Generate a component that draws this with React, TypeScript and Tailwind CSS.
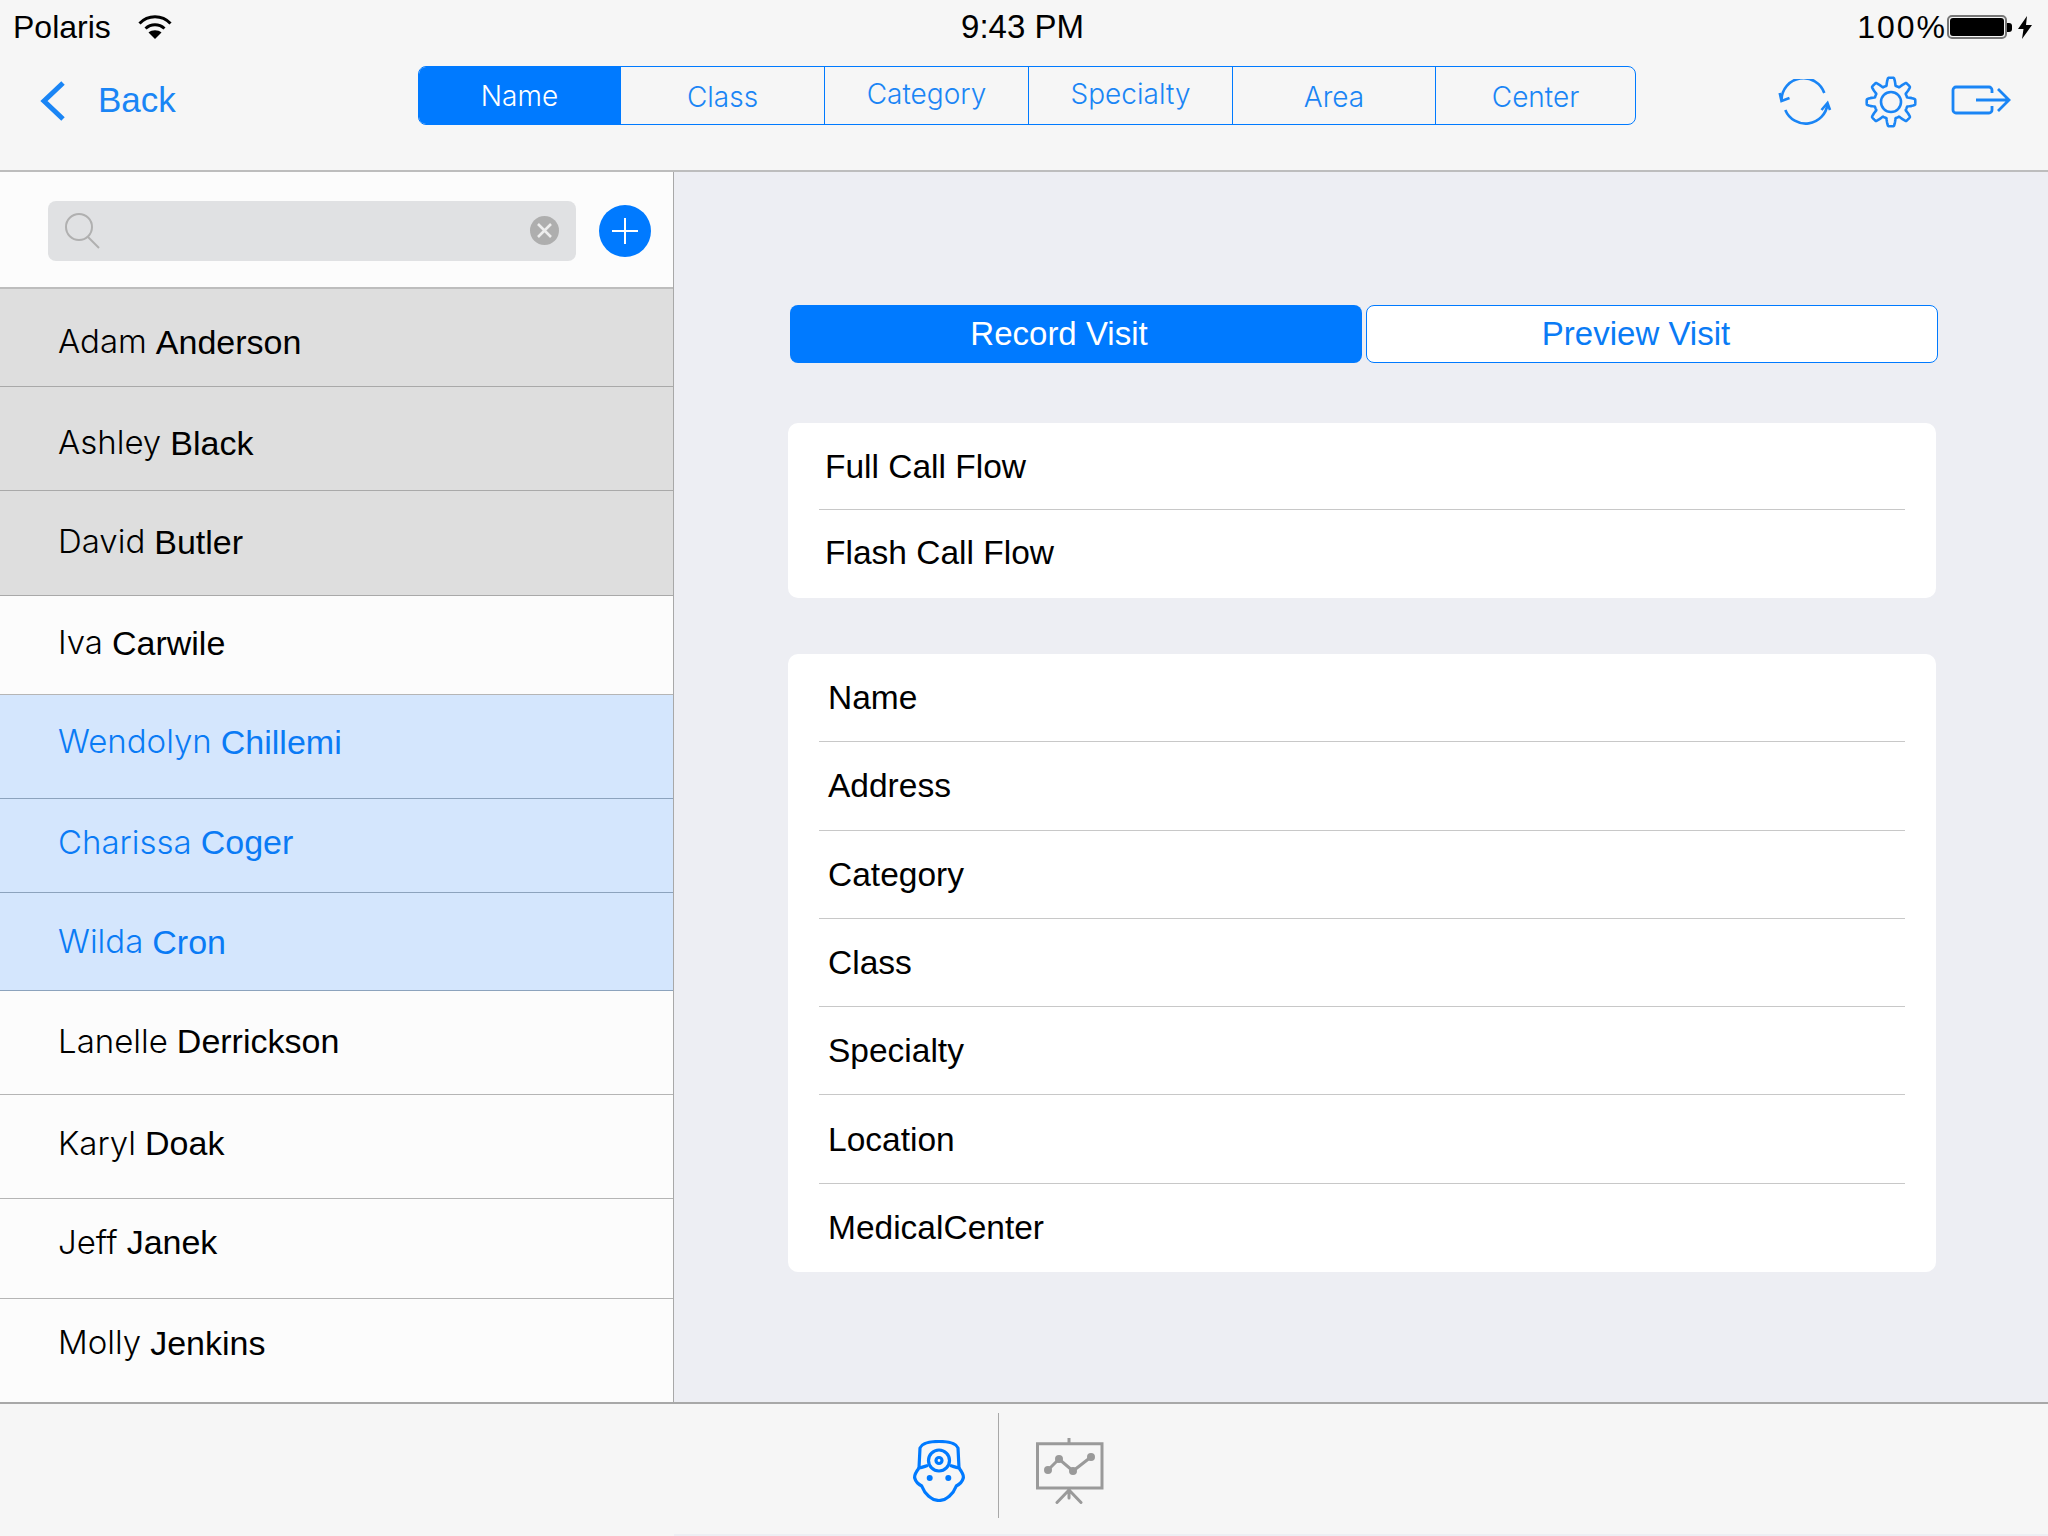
const items = [
  { first: 'Adam', last: 'Anderson', row: 'h-[98px] pt-[9px]', tone: 'gray' },
  { first: 'Ashley', last: 'Black', row: 'h-[104px] pt-[9px]', tone: 'gray' },
  { first: 'David', last: 'Butler', row: 'h-[105px] pb-[2px]', tone: 'gray' },
  { first: 'Iva', last: 'Carwile', row: 'h-[99px] pb-[4px]', tone: 'white' },
  { first: 'Wendolyn', last: 'Chillemi', row: 'h-[104px] pb-[9px]', tone: 'blue' },
  { first: 'Charissa', last: 'Coger', row: 'h-[94px] pb-[6px]', tone: 'blue' },
  { first: 'Wilda', last: 'Cron', row: 'h-[98px] pt-[1px]', tone: 'blue' },
  { first: 'Lanelle', last: 'Derrickson', row: 'h-[104px] pb-[2px]', tone: 'white' },
  { first: 'Karyl', last: 'Doak', row: 'h-[104px] pb-[6px]', tone: 'white' },
  { first: 'Jeff', last: 'Janek', row: 'h-[100px] pb-[12px]', tone: 'white' },
  { first: 'Molly', last: 'Jenkins', row: 'h-[102px] pb-[14px]', tone: 'white' },
];

const tabs = [
  { label: 'Class', cls: 'w-[204px] pt-[2px]' },
  { label: 'Category', cls: 'w-[204px] pb-[3px]' },
  { label: 'Specialty', cls: 'w-[204px] pb-[3px]' },
  { label: 'Area', cls: 'w-[203px] pt-[2px]' },
  { label: 'Center', cls: 'flex-1 pt-[2px]' },
];
const fields = ['Name', 'Address', 'Category', 'Class', 'Specialty', 'Location', 'MedicalCenter'];

// gear outline sampled from a clipped cosine so the 8 teeth stay round
function gearPath() {
  const pts: string[] = [];
  for (let i = 0; i < 240; i++) {
    const a = (i / 240) * Math.PI * 2 - Math.PI / 2;
    const wave = Math.max(-1, Math.min(1, Math.cos(8 * (a + Math.PI / 2)) * 1.7));
    const r = 20.5 + wave * 3.8;
    pts.push((27 + r * Math.cos(a)).toFixed(2) + ' ' + (27 + r * Math.sin(a)).toFixed(2));
  }
  return 'M' + pts.join('L') + 'Z';
}

export default function App() {
  return (
    <div className="w-[2048px] h-[1536px] flex flex-col overflow-hidden bg-[#f6f6f6] font-['Liberation_Sans',sans-serif] text-black">
      <header className="h-[172px] shrink-0 border-b-2 border-[#bdbdbd] bg-[#f6f6f6]">
        <div className="h-[54px] grid grid-cols-3 items-center pl-[13px] pr-[16px] text-[32px]">
          <div className="flex items-center gap-[27px]">
            <span>Polaris</span>
            <svg width="34" height="24" viewBox="0 0 34 24" fill="none" stroke="#000" strokeWidth="3">
              <path d="M1.5 8.5c8.5-9 22.5-9 31 0" />
              <path d="M7.5 13.5c5.5-5 13.5-5 19 0" />
              <path d="M17 24l-6.500-6.500c3.500-3 9.500-3 13 0z" fill="#000" stroke="none" />
            </svg>
          </div>
          <div className="text-center text-[33px]">9:43 PM</div>
          <div className="flex items-center justify-end">
            <span className="tracking-[2px]">100%</span>
            <div className="w-[60px] h-[24px] border-2 border-[#777] rounded-[5px] p-[1px]">
              <div className="w-full h-full bg-black rounded-[3px]" />
            </div>
            <div className="w-[5px] h-[9px] bg-black rounded-r-[3px] mr-[6px]" />
            <svg width="14" height="23" viewBox="0 0 14 23"><path d="M9 0L0 13h5.500l-1.500 10L14 9H8z" fill="#000" /></svg>
          </div>
        </div>
        <div className="flex items-start h-[116px]">
          <div className="w-[418px] flex items-center pl-[39px] h-[92px] text-[#1a85f5] text-[35px]">
            <svg className="mt-[2px]" width="26" height="40" viewBox="0 0 26 40" fill="none" stroke="#1a85f5" strokeWidth="5"><path d="M24 2L5 20l19 18" /></svg>
            <span className="ml-[33px]">Back</span>
          </div>
          <div className="mt-[12px] w-[1218px] h-[59px] flex rounded-[8px] border border-[#007aff] overflow-hidden text-[28px] font-['Inter',sans-serif] font-light text-[#1a85f5]">
            <div className="w-[201px] bg-[#007aff] text-white flex items-center justify-center">Name</div>
            {tabs.map((t) => (
              <div key={t.label} className={t.cls + ' border-l border-[#007aff] flex items-center justify-center'}>{t.label}</div>
            ))}
          </div>
          <div className="flex-1 flex items-center pl-[141px] h-[96px]">
            <svg className="shrink-0" width="56" height="46" viewBox="0 0 56 46" fill="none" stroke="#1a85f5" strokeWidth="2.6">
              <path d="M4.500 21A22 22 0 0 1 47.300 14" />
              <path d="M2.700 14l1.800 8 8-3" />
              <path d="M8.300 31A22 22 0 0 0 50.500 25" />
              <path d="M44.500 31l6-7 2.500 7" />
            </svg>
            <svg className="shrink-0 ml-[31px]" width="54" height="54" viewBox="0 0 54 54" fill="none" stroke="#1a85f5" strokeWidth="2.6" strokeLinejoin="round">
              <path d={gearPath()} />
              <circle cx="27" cy="27" r="10" />
            </svg>
            <svg className="shrink-0 ml-[33px] mb-[4px]" width="60" height="30" viewBox="0 0 60 30" fill="none" stroke="#1a85f5" strokeWidth="2.8">
              <path d="M41 8V5a3 3 0 0 0-3-3H5a3 3 0 0 0-3 3v20a3 3 0 0 0 3 3h33a3 3 0 0 0 3-3v-4" />
              <path d="M25 15h33M47 4l11 11-11 11" />
            </svg>
          </div>
        </div>
      </header>

      <div className="h-[1230px] shrink-0 flex">
        <aside className="w-[674px] shrink-0 border-r border-[#a8a8a8] bg-[#fcfcfc] flex flex-col">
          <div className="h-[117px] shrink-0 flex items-center pl-[48px] pt-[2px] border-b-2 border-[#bdbdbd]">
            <div className="w-[528px] h-[60px] rounded-[8px] bg-[#e0e1e3] flex items-center justify-between pl-[16px] pr-[17px]">
              <svg width="38" height="38" viewBox="0 0 38 38" fill="none" stroke="#b0b0b0" strokeWidth="2">
                <circle cx="15" cy="15" r="13" />
                <path d="M24 25l11 11" />
              </svg>
              <div className="w-[29px] h-[29px] rounded-full bg-[#aeaeae] flex items-center justify-center">
                <svg width="17" height="17" viewBox="0 0 17 17" stroke="#eee" strokeWidth="2.6"><path d="M2 2l13 13M15 2L2 15" /></svg>
              </div>
            </div>
            <div className="ml-[23px] w-[52px] h-[52px] rounded-full bg-[#007aff] flex items-center justify-center">
              <svg width="28" height="28" viewBox="0 0 28 28" stroke="#fff" strokeWidth="2"><path d="M14 1v26M1 14h26" /></svg>
            </div>
          </div>
          {items.map((p) => (
            <div
              key={p.last}
              className={
                p.row + ' shrink-0 flex items-center pl-[58px] text-[34px] border-b last:border-b-0 ' +
                (p.tone === 'gray' ? 'bg-[#dedede] border-[#a9a9a9]' : p.tone === 'blue' ? 'bg-[#d4e6fd] border-[#8ca3bd] text-[#0a7bf5]' : 'bg-[#fcfcfc] border-[#b5b5b5]')
              }
            >
              <span className="font-['Inter',sans-serif] font-light text-[33px]">{p.first}</span>
              <span className="ml-[9px]">{p.last}</span>
            </div>
          ))}
        </aside>
        <main className="flex-1 bg-[#edeef3] pl-[114px] pr-[112px] pt-[133px]">
          <div className="flex gap-[4px] h-[58px] text-[33px] ml-[2px] -mr-[2px]">
            <div className="w-[572px] rounded-[8px] bg-[#007aff] text-white flex items-center justify-center pr-[34px]">Record Visit</div>
            <div className="flex-1 rounded-[8px] bg-white border border-[#007aff] text-[#0a7bf5] flex items-center justify-center pr-[32px]">Preview Visit</div>
          </div>
          <div className="mt-[60px] rounded-[10px] bg-white pl-[31px] pr-[31px] text-[33.5px]">
            <div className="h-[87px] pt-[2px] border-b border-[#c8c8c8] flex items-center pl-[6px]">Full Call Flow</div>
            <div className="h-[88px] pb-[2px] flex items-center pl-[6px]">Flash Call Flow</div>
          </div>
          <div className="mt-[56px] rounded-[10px] bg-white pl-[31px] pr-[31px] text-[33.5px]">
            {fields.map((f, i) => (
              <div key={f} className={i === 6 ? 'h-[88.3px] pt-[1px] flex items-center pl-[9px]' : 'h-[88.3px] pt-[1px] border-b border-[#c8c8c8] flex items-center pl-[9px]'}>{f}</div>
            ))}
          </div>
        </main>
      </div>

      <footer className="flex-1 border-t-2 border-[#a8a8a8] flex flex-col bg-[#f6f6f6]">
        <div className="flex-1 flex items-start justify-center">
          <div className="flex items-center h-[105px] mt-[9px] ml-[-27px]">
            <div className="w-[118px] h-full pt-[10px] flex items-center justify-center">
              <svg width="52" height="62" viewBox="0 0 52 62" fill="none" stroke="#007aff" strokeWidth="3.2" strokeLinejoin="round">
                <path d="M6 28L7 8C9 3 16 1.500 26 1.500S43 3 45 8l1 20" />
                <path d="M6 28C3 32 1 35 1.700 38c.8 3 3.300 6 7 8 3 8 10 14.500 17.300 14.500S40.300 54 43.300 46c3.700-2 6.200-5 7-8 .7-3-1.300-6-4.300-10-4-1-7-2-9-2.500M6 28c4-1 7-2 9-2.500" />
                <circle cx="26" cy="20.500" r="10.500" />
                <circle cx="26" cy="20.500" r="3" />
                <circle cx="16.700" cy="38" r="3" fill="#007aff" stroke="none" />
                <circle cx="35.300" cy="38" r="3" fill="#007aff" stroke="none" />
              </svg>
            </div>
            <div className="w-px h-full bg-[#a8a8a8]" />
            <div className="w-[142px] h-full pt-[10px] flex items-center justify-center">
              <svg width="68" height="66" viewBox="0 0 68 66" fill="none" stroke="#9a9a9a" strokeWidth="3" strokeLinecap="round">
                <path d="M33 0v5.700M1.500 5.700h64.500v44.300H1.500zM33 50v10M33 52L21 64.500M33 52l12 12.500" />
                <path d="M12 32l11-11 14 12 18-14" />
                <circle cx="12" cy="32" r="2.500" fill="#9a9a9a" />
                <circle cx="23" cy="21" r="2.500" fill="#9a9a9a" />
                <circle cx="37" cy="33" r="2.500" fill="#9a9a9a" />
                <circle cx="55" cy="19" r="2.500" fill="#9a9a9a" />
              </svg>
            </div>
          </div>
        </div>
        <div className="h-[2px] ml-[674px] bg-[#edeef3]" />
      </footer>
    </div>
  );
}
